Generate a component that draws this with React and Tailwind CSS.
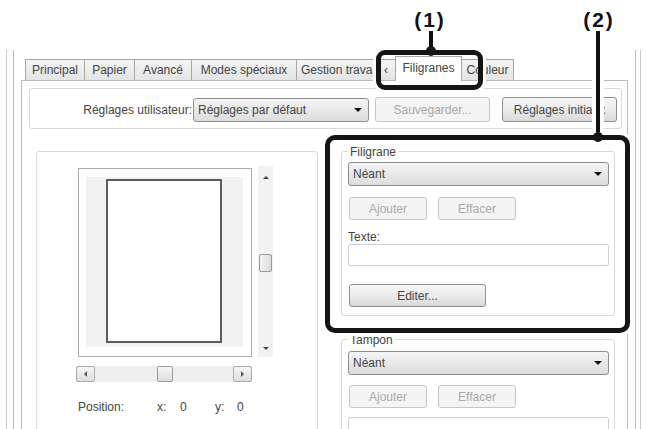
import React from "react";

const TXT = "text-[#454545]";

function Arrow({ dir = "down", size = 4, color = "#111" }) {
  const s = size;
  let pts;
  if (dir === "down") pts = `0,0 ${2 * s},0 ${s},${s}`;
  else if (dir === "up") pts = `0,${s} ${2 * s},${s} ${s},0`;
  else if (dir === "left") pts = `${s},0 ${s},${2 * s} 0,${s}`;
  else pts = `0,0 0,${2 * s} ${s},${s}`;
  const w = dir === "down" || dir === "up" ? 2 * s : s;
  const h = dir === "down" || dir === "up" ? s : 2 * s;
  return (
    <svg width={w} height={h} viewBox={`0 0 ${w} ${h}`} className="block">
      <polygon points={pts} fill={color} />
    </svg>
  );
}

function Select({ text, className }) {
  return (
    <div
      className={`flex items-center justify-between border border-[#8e8e8e] rounded-[3px] bg-linear-to-b from-[#f4f4f4] to-[#dddddd] pl-[4px] pr-[6px] ${TXT} ${className}`}
    >
      <span className="leading-[16px]">{text}</span>
      <Arrow dir="down" size={4} />
    </div>
  );
}

function Button({ children, disabled, className }) {
  return disabled ? (
    <div
      className={`flex items-center justify-center border border-[#c6c6c6] rounded-[3px] bg-[#f4f4f4] text-[#a9a9a9] leading-[16px] ${className}`}
    >
      {children}
    </div>
  ) : (
    <div
      className={`flex items-center justify-center border border-[#8f8f8f] rounded-[3px] bg-linear-to-b from-[#f6f6f6] via-[#ececec] to-[#d9d9d9] ${TXT} leading-[16px] ${className}`}
    >
      {children}
    </div>
  );
}

function Tab({ children, className = "" }) {
  return (
    <div
      className={`-ml-px first:ml-0 h-[21px] flex items-center justify-center border-t border-l border-r border-[#a7a7a7] bg-linear-to-b from-[#f4f4f4] to-[#e4e4e4] ${TXT} leading-[16px] ${className}`}
    >
      {children}
    </div>
  );
}

function ScrollBtn({ dir, className = "" }) {
  return (
    <div
      className={`flex items-center justify-center border border-[#ababab] rounded-[2px] bg-linear-to-b from-[#f6f6f6] to-[#dedede] ${className}`}
    >
      <Arrow dir={dir} size={3} color="#555" />
    </div>
  );
}

export default function App() {
  return (
    <div className="relative w-[646px] h-[429px] overflow-hidden bg-white font-['Liberation_Sans',Arial,sans-serif] text-[12px]">
      {/* Window frame */}
      <div className="ml-[6px] mt-[50px] w-[635px] h-[379px] border-x border-[#c9c9c9]">
        <div className="ml-[6px] w-[623px] h-full border-x border-[#bdbdbd] pt-[6px]">
          <div className="ml-[7px] w-[607px]">
            {/* Tabs */}
            <div className="relative z-10 flex items-end h-[24px] pl-[4px]">
              <Tab className="w-[60px]">Principal</Tab>
              <Tab className="w-[51px]">Papier</Tab>
              <Tab className="w-[58px]">Avancé</Tab>
              <Tab className="w-[106px]">Modes spéciaux</Tab>
              <Tab className="w-[100px] !justify-between pl-[4px] pr-[7px]">
                <span>Gestion trava</span>
                <span>‹</span>
              </Tab>
              <div
                className={`-ml-px h-[25px] -mb-px w-[67px] flex items-center justify-center border-t border-l border-r border-[#a7a7a7] bg-white ${TXT} leading-[16px] pb-[2px]`}
              >
                Filigranes
              </div>
              <Tab className="w-[53px]">Couleur</Tab>
            </div>

            {/* Panel */}
            <div className="h-[360px] border border-[#bcbcbc] bg-white">
              {/* Réglages utilisateur group */}
              <div className="ml-[7px] mt-[7px] w-[593px] h-[41px] border border-[#d9d9d9] rounded-[3px] flex items-center pt-[2px]">
                <div className={`w-[162px] text-right ${TXT} leading-[16px]`}>
                  Réglages utilisateur:
                </div>
                <Select text="Réglages par défaut" className="ml-[1px] w-[176px] h-[24px]" />
                <Button disabled className="ml-[6px] w-[115px] h-[25px]">
                  Sauvegarder...
                </Button>
                <Button className="ml-[12px] w-[115px] h-[25px]">Réglages initiaux</Button>
              </div>

              {/* Lower area */}
              <div className="flex mt-[22px]">
                {/* Preview group */}
                <div className="ml-[14px] w-[282px] h-[300px] border border-[#d9d9d9] rounded-[3px]">
                  <div className="flex items-start pl-[41px]">
                    <div className="mt-[16px] w-[174px] h-[189px] border border-[#ababab] bg-white pl-[7px] pt-[8px]">
                      <div className="w-[157px] h-[170px] bg-[#f2f2f2] pl-[20px] pt-[2px]">
                        <div className="w-[116px] h-[164px] border-2 border-[#5c5c5c] bg-white" />
                      </div>
                    </div>
                    <div className="ml-[6px] mt-[14px] w-[15px] h-[191px] bg-[#f2f2f2] flex flex-col">
                      <div className="h-[22px] flex items-center justify-center">
                        <Arrow dir="up" size={3} color="#444" />
                      </div>
                      <div className="flex-1">
                        <div className="mt-[66px] mx-auto w-[13px] h-[18px] border border-[#9a9a9a] rounded-[2px] bg-linear-to-r from-[#f4f4f4] to-[#dcdcdc]" />
                      </div>
                      <div className="h-[18px] flex items-center justify-center">
                        <Arrow dir="down" size={3} color="#444" />
                      </div>
                    </div>
                  </div>
                  <div className="ml-[39px] mt-[9px] w-[176px] h-[16px] bg-[#efefef] flex">
                    <ScrollBtn dir="left" className="w-[19px] h-[16px]" />
                    <div className="flex-1">
                      <div className="ml-[62px] w-[16px] h-[16px] border border-[#9a9a9a] rounded-[2px] bg-linear-to-b from-[#f6f6f6] to-[#dcdcdc]" />
                    </div>
                    <ScrollBtn dir="right" className="w-[19px] h-[16px]" />
                  </div>
                  <div className={`ml-[41px] mt-[17px] flex leading-[16px] ${TXT}`}>
                    <span className="w-[79px]">Position:</span>
                    <span className="w-[23px]">x:</span>
                    <span className="w-[35px]">0</span>
                    <span className="w-[22px]">y:</span>
                    <span>0</span>
                  </div>
                </div>

                {/* Right column */}
                <div className="ml-[23px] w-[274px]">
                  {/* Filigrane */}
                  <div className="border border-[#d9d9d9] rounded-[3px] pb-[8px]">
                    <div className={`-mt-[8px] ml-[6px] px-[2px] w-fit bg-white leading-[16px] ${TXT}`}>
                      Filigrane
                    </div>
                    <Select text="Néant" className="mt-[2px] ml-[6px] w-[261px] h-[24px]" />
                    <div className="flex mt-[11px] ml-[7px]">
                      <Button disabled className="w-[78px] h-[23px]">Ajouter</Button>
                      <Button disabled className="ml-[11px] w-[78px] h-[23px]">Effacer</Button>
                    </div>
                    <div className={`mt-[11px] ml-[6px] leading-[13px] ${TXT}`}>Texte:</div>
                    <div className="ml-[6px] w-[261px] h-[22px] border border-[#cfcfcf] rounded-[2px] bg-white" />
                    <Button className="mt-[18px] ml-[7px] w-[137px] h-[23px]">Editer...</Button>
                  </div>

                  {/* Tampon */}
                  <div className="mt-[23px] h-[120px] border border-[#d9d9d9] rounded-[3px]">
                    <div className={`-mt-[8px] ml-[6px] px-[2px] w-fit bg-white leading-[16px] ${TXT}`}>
                      Tampon
                    </div>
                    <Select text="Néant" className="mt-[3px] ml-[6px] w-[261px] h-[24px]" />
                    <div className="flex mt-[10px] ml-[7px]">
                      <Button disabled className="w-[78px] h-[23px]">Ajouter</Button>
                      <Button disabled className="ml-[11px] w-[78px] h-[23px]">Effacer</Button>
                    </div>
                    <div className="mt-[9px] ml-[6px] w-[261px] h-[22px] border border-[#cfcfcf] rounded-[2px] bg-white" />
                  </div>
                </div>
              </div>
            </div>
          </div>
        </div>
      </div>

      {/* Callout (1) */}
      <div className="absolute z-20 left-[407px] top-[8px] w-[46px] text-center font-bold text-[21px] leading-[24px] text-[#111] tracking-[2px]">
        (1)
      </div>
      <div className="absolute z-20 left-[429px] top-[31px] w-[4px] h-[20px] bg-[#111]" />
      <div className="absolute z-20 left-[376px] top-[50px] w-[107px] h-[40px] border-[5px] border-[#151515] rounded-[9px] shadow-[0_0_0_3px_#ffffff]" />
      <div className="absolute z-20 left-[426px] top-[46px] w-[10px] h-[10px] rounded-full bg-[#151515]" />

      {/* Callout (2) */}
      <div className="absolute z-20 left-[576px] top-[8px] w-[46px] text-center font-bold text-[21px] leading-[24px] text-[#111] tracking-[2px]">
        (2)
      </div>
      <div className="absolute z-20 left-[592px] top-[31px] w-[12px] h-[104px] bg-white" />
      <div className="absolute z-20 left-[596px] top-[31px] w-[4px] h-[105px] bg-[#111]" />
      <div className="absolute z-20 left-[325px] top-[135px] w-[305px] h-[198px] border-[5px] border-[#151515] rounded-[10px] shadow-[0_0_0_3px_#ffffff]" />
      <div className="absolute z-20 left-[593px] top-[132px] w-[10px] h-[10px] rounded-full bg-[#151515]" />
    </div>
  );
}
